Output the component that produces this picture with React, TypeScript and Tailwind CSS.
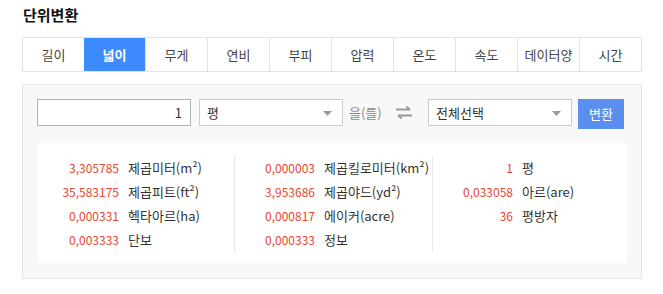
import React from "react";

const tabs = ["길이", "넓이", "무게", "연비", "부피", "압력", "온도", "속도", "데이터양", "시간"];

const cols: [string, string, boolean][][] = [
  [
    ["3,305785", "제곱미터(m²)", true],
    ["35,583175", "제곱피트(ft²)", true],
    ["0,000331", "헥타아르(ha)", true],
    ["0,003333", "단보", true],
  ],
  [
    ["0,000003", "제곱킬로미터(km²)", true],
    ["3,953686", "제곱야드(yd²)", true],
    ["0,000817", "에이커(acre)", true],
    ["0,000333", "정보", true],
  ],
  [
    ["1", "평", true],
    ["0,033058", "아르(are)", true],
    ["36", "평방자", true],
  ],
];

function Caret() {
  return (
    <svg width="9" height="5" viewBox="0 0 9 5" className="absolute right-[10px] top-[11px]">
      <path d="M0 0 L9 0 L4.5 5 Z" fill="#9a9a9a" />
    </svg>
  );
}

export default function App() {
  return (
    <div
      className="w-[663px] h-[294px] bg-white text-[#333]"
      style={{ fontFamily: '"Noto Sans CJK KR", "Noto Sans", sans-serif' }}
    >
      <div className="pl-[23px] pt-[5px] h-[37px]">
        <div className="text-[15px] font-bold leading-[20px] text-[#111]">단위변환</div>
      </div>
      <div className="mx-[22px] w-[620px] flex border border-[#e3e3e3] h-[35px]">
        {tabs.map((t, i) => (
          <div
            key={t}
            className={
              i === 1
                ? "flex-1 flex items-center justify-center text-[13px] bg-[#3d8bfd] text-white font-bold"
                : i === 0
                ? "flex-1 flex items-center justify-center text-[13px] text-[#444]"
                : "flex-1 flex items-center justify-center text-[13px] text-[#444] border-l border-[#e3e3e3]"
            }
          >
            {t}
          </div>
        ))}
      </div>
      <div className="mt-[12px] mx-[22px] w-[620px] h-[195px] border border-[#e6e6e6] bg-[#f8f8f8] pt-[14px] pl-[14px] pr-[14px]">
        <div className="flex items-start h-[30px]">
          <div className="w-[154px] h-[27px] border border-[#b3b3b3] bg-white flex items-center justify-end pr-[8px] text-[13px] text-[#333]">
            1
          </div>
          <div className="relative ml-[8px] w-[144px] h-[27px] border border-[#cccccc] bg-white flex items-center pl-[7px] text-[13px] text-[#333]">
            평
            <Caret />
          </div>
          <div className="ml-[6px] w-[32px] h-[27px] flex items-center text-[13px] text-[#888] whitespace-nowrap">을(를)</div>
          <div className="ml-[15px] h-[27px] flex items-center">
            <svg width="16" height="13" viewBox="0 0 16 13">
              <path d="M0 3.5 H14 M10.5 0.5 L14 3.5" stroke="#999" strokeWidth="1.8" fill="none" />
              <path d="M16 9.5 H2 M5.5 12.5 L2 9.5" stroke="#999" strokeWidth="1.8" fill="none" />
            </svg>
          </div>
          <div className="relative ml-[16px] w-[144px] h-[27px] border border-[#cccccc] bg-white flex items-center pl-[7px] text-[13px] text-[#333]">
            전체선택
            <Caret />
          </div>
          <div className="ml-[6px] w-[46px] h-[30px] bg-[#5a8ff0] text-white flex items-center justify-center text-[13px]">
            변환
          </div>
        </div>
        <div className="mt-[14px] ml-[1px] w-[589px] h-[120px] bg-white pt-[13px] flex">
          {cols.map((col, ci) => (
            <div
              key={ci}
              className={
                ci === 1
                  ? "w-[199px] h-[96px] border-l border-r border-[#e8e8e8]"
                  : ci === 0
                  ? "w-[196px] h-[96px]"
                  : "w-[193px] h-[96px]"
              }
            >
              {col.map(([n, l]) => (
                <div key={l} className="flex items-center h-[24px]">
                  <div
                    className={
                      ci === 0
                        ? "w-[81px] text-right text-[12px] text-[#e8452f]"
                        : "w-[80px] text-right text-[12px] text-[#e8452f]"
                    }
                  >
                    {n}
                  </div>
                  <div className="ml-[9px] text-[13px] text-[#333]">{l}</div>
                </div>
              ))}
            </div>
          ))}
        </div>
      </div>
    </div>
  );
}
